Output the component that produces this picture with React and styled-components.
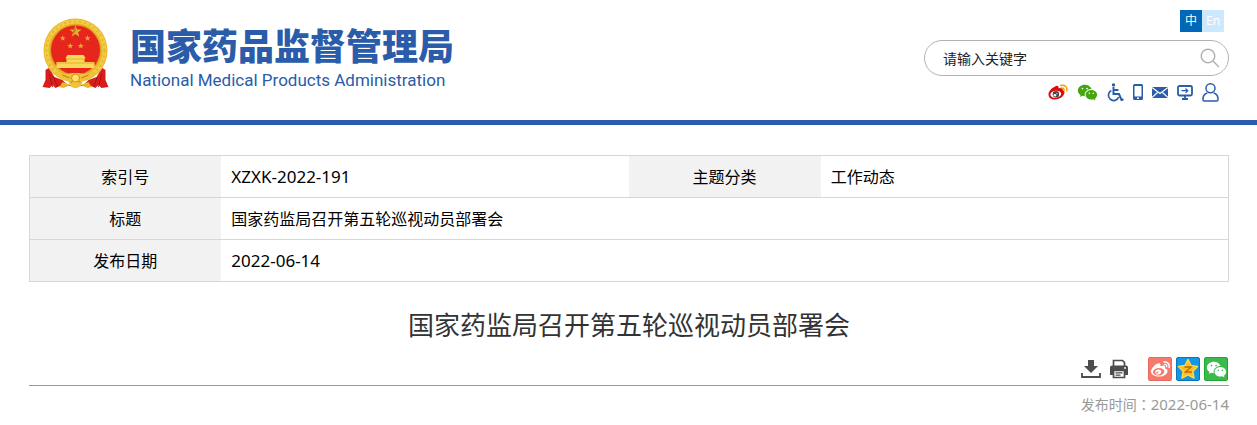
import React from 'react';
import styled, { createGlobalStyle } from 'styled-components';
import { FaWeibo } from 'react-icons/fa';
import { RiWechatFill } from 'react-icons/ri';

const GlobalStyle = createGlobalStyle`
  * {
    box-sizing: border-box;
  }
  body {
    margin: 0;
    background: #fff;
    color: #000;
    font-family: 'Noto Sans CJK SC', sans-serif;
    font-size: 16px;
  }
`;

const Header = styled.header`
  display: flex;
  justify-content: space-between;
  align-items: flex-start;
  padding: 10px 28px 18px 29px;
  border-bottom: 5px solid #2a5caa;
`;

const Logo = styled.a`
  display: flex;
  align-items: flex-start;
  gap: 21px;
  padding: 8px 0 0 13px;
  color: #2a5caa;
  text-decoration: none;
`;

const LogoText = styled.div`
  display: flex;
  flex-direction: column;
  gap: 4px;
  padding-top: 6px;
`;

const LogoName = styled.strong`
  font-size: 36px;
  line-height: 40px;
  font-weight: 900;
`;

const LogoEnglish = styled.span`
  font-family: Roboto, 'Liberation Sans', sans-serif;
  font-size: 17px;
  line-height: 24px;
`;

const HeaderTools = styled.div`
  display: flex;
  flex-direction: column;
  align-items: flex-end;
`;

const Languages = styled.nav`
  display: flex;
  margin: 0 5px 8px 0;
`;

const Language = styled.a`
  width: 22px;
  height: 22px;
  background: ${({ $active }) => ($active ? '#0068b7' : '#cce8ff')};
  color: #fff;
  font-family: 'Noto Sans', 'Noto Sans CJK SC', sans-serif;
  font-size: 12px;
  line-height: 22px;
  text-align: center;
  text-decoration: none;
`;

const Search = styled.form`
  display: flex;
  align-items: center;
  width: 305px;
  height: 36px;
  padding: 0 8px 0 18px;
  border: 1px solid #b3b3b3;
  border-radius: 18px;
`;

const SearchInput = styled.input`
  flex: 1;
  min-width: 0;
  padding: 0;
  border: 0;
  outline: 0;
  background: none;
  font-family: 'Noto Sans CJK SC', sans-serif;
  font-size: 14px;
  color: #222;

  &::placeholder {
    color: #222;
    opacity: 1;
  }
`;

const IconButton = styled.button`
  display: flex;
  padding: 0;
  border: 0;
  background: none;
  color: ${({ $color }) => $color || '#4d4d4d'};
  cursor: pointer;
`;

const QuickLinks = styled.nav`
  display: flex;
  align-items: center;
  gap: 9px;
  height: 20px;
  margin: 6px 10px 0 0;
`;

const QuickLink = styled.a`
  display: flex;
  color: ${({ $color }) => $color || '#2a5caa'};
`;

const Main = styled.main`
  padding: 30px 28px 8px 29px;
`;

const InfoTable = styled.table`
  width: 100%;
  table-layout: fixed;
  border-collapse: collapse;
  border: 1px solid #d7d7d7;
`;

const InfoRow = styled.tr`
  border-bottom: 1px solid #d7d7d7;
`;

const InfoLabel = styled.th`
  width: 16%;
  height: 42px;
  padding: 0 1px 1px 0;
  background: #f2f2f2;
  font-weight: 400;
  line-height: 24px;
`;

const InfoValue = styled.td`
  padding: 0 10px 1px;
  line-height: 24px;
`;

const Latin = styled.span`
  font-family: 'Noto Sans', sans-serif;
  font-size: ${({ $small }) => ($small ? '15px' : '17px')};
`;

// full-width colon centred in its cell
const Colon = styled.span`
  font-family: 'Noto Sans CJK TC', sans-serif;
`;

const Title = styled.h1`
  margin: 22px 0 13px;
  color: #333;
  font-size: 26px;
  line-height: 40px;
  font-weight: 400;
  text-align: center;
`;

const Toolbar = styled.div`
  display: flex;
  justify-content: flex-end;
  align-items: center;
  gap: 4px;
  padding: 0 1px 4px 0;
  border-bottom: 1px solid #999;
`;

const PageActions = styled.div`
  display: flex;
  gap: 8px;
  margin-right: 15px;
`;

const ShareLink = styled.a`
  display: flex;
  align-items: center;
  justify-content: center;
  width: 24px;
  height: 24px;
  border: 1px solid ${({ $border }) => $border};
  border-radius: 2px;
  background: ${({ $background }) => $background};
  color: #fff;
`;

const Published = styled.p`
  margin: 6px 0 0;
  color: #999;
  font-size: 14px;
  line-height: 24px;
  text-align: right;
`;

const star = (cx, cy, r) =>
  Array.from({ length: 10 }, (_, i) => {
    const radius = i % 2 ? r * 0.4 : r;
    const angle = (Math.PI / 5) * i - Math.PI / 2;
    return `${cx + radius * Math.cos(angle)},${cy + radius * Math.sin(angle)}`;
  }).join(' ');

const Emblem = () => (
  <svg width="67" height="71" viewBox="0 0 66 71" aria-hidden="true">
    <circle cx="33" cy="32.500" r="32" fill="#e9b52a" />
    <circle cx="33" cy="32.500" r="29" fill="none" stroke="#f3cb45" strokeWidth="4" />
    <circle cx="33" cy="32.500" r="29" fill="none" stroke="#e8b632" strokeWidth="2" strokeDasharray="2 3" />
    <circle cx="33" cy="32" r="25" fill="none" stroke="#d69a16" strokeWidth="1" />
    <circle cx="33" cy="32" r="24.500" fill="#e6251d" />
    <polygon points={star(33, 13.5, 6.5)} fill="#e3b434" />
    <path d="M33 7v6.500l-4 5.300z" fill="#b8801a" />
    {[[20.3, 20.2], [45, 20.2], [27.7, 28], [38.3, 28]].map(([x, y]) => (
      <polygon key={x} points={star(x, y, 3.2)} fill="#ddb02f" />
    ))}
    <path d="M25 37h16l2 3-1 1v3h10v6H14v-6h10v-3l-1-1z" fill="#f8d95a" />
    <path d="M24 41h18M14 45h38" stroke="#dfa527" strokeWidth=".8" />
    <path d="M6 50l3 4 3 5 8 3 6 6h14l6-6 8-3 3-5 3-4 3 2v10l3 7-7 1-3-3-3 3-7-3H20l-7 3-3-3-3 3-7-1 3-7V52z" fill="#d81e1b" />
    <path d="M7 56l3 13M11 59l4 10M59 56l-3 13M55 59l-4 10" stroke="#a9140f" strokeWidth="1" />
    <path d="M12 53c7 4 14 3 18 2h6c4 1 11 2 18-2l-7 8-7 2c-1 5-3 7-7 7s-6-2-7-7l-7-2z" fill="#f0c238" />
    <path d="M20 57l7 3M46 57l-7 3M28 65l3-3M38 65l-3-3" stroke="#bd7b12" strokeWidth="1" />
    <circle cx="33" cy="60" r="4" fill="#ffe26a" stroke="#cf8c17" />
    <path d="M20 64l8 3-7 3-4-1zM46 64l-8 3 7 3 4-1z" fill="#e8b42c" />
  </svg>
);

const SearchIcon = () => (
  <svg width="20" height="20" viewBox="0 0 20 20" fill="none" stroke="#b3b3b3" strokeWidth="1.500">
    <circle cx="8" cy="8" r="6.800" />
    <path d="M13 13l6 6" />
  </svg>
);

const WeiboColorIcon = () => (
  <svg width="20" height="16" viewBox="0 0 20 16">
    <path d="M7 2.600C9.500 1 11 2 10.500 4.200c3-1.200 5-.4 4.100 1.900 2.200.8 2.300 2.600 1.500 4C14.700 13.500 11 15.500 7 15.500S.5 13.500.5 10.400C.5 7.500 3.600 4.100 7 2.600z" fill="#dc0b12" />
    <ellipse cx="7.800" cy="10.200" rx="5.400" ry="3.500" fill="#fff" transform="rotate(-8 7.800 10.200)" />
    <circle cx="7.900" cy="10.300" r="3.200" fill="#444" />
    <circle cx="6.900" cy="11.200" r="1.300" fill="#fff" />
    <circle cx="8.900" cy="9.700" r=".6" fill="#fff" />
    <path d="M12.700 1.500c4-1.300 7 1.700 5.900 5.300M13.200 4.100c2-.6 3.300.7 2.700 2.500" fill="none" stroke="#f0a300" strokeWidth="1.500" strokeLinecap="round" />
  </svg>
);

const WheelchairIcon = () => (
  <svg width="17" height="19" viewBox="0 0 17 19" fill="none" stroke="currentColor" strokeWidth="1.700">
    <circle cx="6.500" cy="1.900" r="1.700" fill="currentColor" stroke="none" />
    <path d="M6.500 4v7H12l2.500 6 2-.8M6.500 7h5" strokeWidth="2" />
    <path d="M4.300 7.500A5.300 5.300 0 1 0 11.700 14" />
  </svg>
);

const PhoneIcon = () => (
  <svg width="10" height="16" viewBox="0 0 10 16">
    <path fillRule="evenodd" fill="currentColor" d="M1.500 0h7A1.500 1.500 0 0 1 10 1.500v13A1.500 1.500 0 0 1 8.500 16h-7A1.500 1.500 0 0 1 0 14.500v-13A1.500 1.500 0 0 1 1.500 0zM1.500 2v10.500h7V2zM4 13.500V15h2v-1.500z" />
  </svg>
);

const MailIcon = () => (
  <svg width="16" height="11" viewBox="0 0 16 11">
    <path fill="currentColor" d="M0 0h16v11H0z" />
    <path d="M0 .5l8 6 8-6M0 10.500l5.500-5M16 10.500l-5.500-5" fill="none" stroke="#fff" strokeWidth="1.100" />
  </svg>
);

const MonitorIcon = () => (
  <svg width="16" height="15" viewBox="0 0 16 15" fill="none" stroke="currentColor">
    <rect x="1" y="1" width="14" height="9.500" rx="1.500" strokeWidth="1.800" />
    <path d="M4.500 5.700h6M8.500 3.500l2.300 2.200-2.300 2.200" strokeWidth="1.200" />
    <path d="M8 11v3M5 14h6" strokeWidth="1.800" />
  </svg>
);

const UserIcon = () => (
  <svg width="17" height="19" viewBox="0 0 17 19" fill="none" stroke="currentColor" strokeWidth="1.500">
    <circle cx="8.500" cy="5.300" r="4.500" />
    <path d="M5.300 10C2.300 11 .9 13.500.9 16.300c0 1.200.6 1.800 1.600 1.800h12c1 0 1.600-.6 1.600-1.800 0-2.800-1.400-5.300-4.400-6.300" />
  </svg>
);

const DownloadIcon = () => (
  <svg width="20" height="20" viewBox="0 0 20 20" fill="currentColor">
    <path d="M7 1h6v6h4l-7 7-7-7h4z" />
    <path d="M1 14v4h18v-4" fill="none" stroke="currentColor" strokeWidth="1.800" />
  </svg>
);

const PrintIcon = () => (
  <svg width="20" height="20" viewBox="0 0 20 20">
    <path d="M4.500 7V1.500h9L15.500 3.500V7" fill="#fff" stroke="currentColor" strokeWidth="1.700" />
    <path d="M3 6.500h14a2 2 0 0 1 2 2V16H1V8.500a2 2 0 0 1 2-2z" fill="currentColor" />
    <path d="M4.500 11.500h11v7h-11z" fill="#fff" stroke="currentColor" strokeWidth="1.700" />
    <path d="M6.500 13.900h7M6.500 16.200h5" stroke="currentColor" strokeWidth="1.200" />
    <circle cx="16" cy="9" r=".9" fill="#fff" />
  </svg>
);

const QzoneIcon = () => (
  <svg width="22" height="22" viewBox="0 0 22 22">
    <path d="M11 1.500l3 6 6.500 1-4.700 4.800 1.200 6.700-6-3.200L5 20l1.200-6.700L1.500 8.500l6.500-1z" fill="#fdbd20" stroke="#ffd93a" strokeWidth="1.500" strokeLinejoin="round" />
    <path d="M7.500 9h6.500l-5.500 5h6.500" fill="none" stroke="#bd6b09" strokeWidth="1.400" />
  </svg>
);

const quickLinks = [
  { label: '微博', icon: <WeiboColorIcon /> },
  { label: '微信', icon: <RiWechatFill size={21} />, color: '#45a60f' },
  { label: '无障碍', icon: <WheelchairIcon /> },
  { label: '手机版', icon: <PhoneIcon /> },
  { label: '邮箱', icon: <MailIcon /> },
  { label: '电脑版', icon: <MonitorIcon /> },
  { label: '个人中心', icon: <UserIcon /> },
];

const shareLinks = [
  { label: '分享到微博', icon: <FaWeibo size={19} />, background: '#f67a6b', border: '#e96b5f' },
  { label: '分享到QQ空间', icon: <QzoneIcon />, background: '#1596e5', border: '#0876c4' },
  { label: '分享到微信', icon: <RiWechatFill size={21} />, background: '#3bb94a', border: '#21a735' },
];

const App = () => {
  return (
    <>
      <GlobalStyle />
      <Header>
        <Logo href="#">
          <Emblem />
          <LogoText>
            <LogoName>国家药品监督管理局</LogoName>
            <LogoEnglish>National Medical Products Administration</LogoEnglish>
          </LogoText>
        </Logo>
        <HeaderTools>
          <Languages>
            <Language href="#" $active>中</Language>
            <Language href="#">En</Language>
          </Languages>
          <Search role="search">
            <SearchInput type="text" placeholder="请输入关键字" aria-label="请输入关键字" />
            <IconButton type="submit" aria-label="搜索">
              <SearchIcon />
            </IconButton>
          </Search>
          <QuickLinks>
            {quickLinks.map((link) => (
              <QuickLink key={link.label} href="#" aria-label={link.label} $color={link.color}>
                {link.icon}
              </QuickLink>
            ))}
          </QuickLinks>
        </HeaderTools>
      </Header>
      <Main>
        <InfoTable>
          <tbody>
            <InfoRow>
              <InfoLabel scope="row">索引号</InfoLabel>
              <InfoValue><Latin>XZXK-2022-191</Latin></InfoValue>
              <InfoLabel scope="row">主题分类</InfoLabel>
              <InfoValue>工作动态</InfoValue>
            </InfoRow>
            <InfoRow>
              <InfoLabel scope="row">标题</InfoLabel>
              <InfoValue colSpan={3}>国家药监局召开第五轮巡视动员部署会</InfoValue>
            </InfoRow>
            <InfoRow>
              <InfoLabel scope="row">发布日期</InfoLabel>
              <InfoValue colSpan={3}><Latin>2022-06-14</Latin></InfoValue>
            </InfoRow>
          </tbody>
        </InfoTable>
        <Title>国家药监局召开第五轮巡视动员部署会</Title>
        <Toolbar>
          <PageActions>
            <IconButton type="button" aria-label="下载"><DownloadIcon /></IconButton>
            <IconButton type="button" aria-label="打印"><PrintIcon /></IconButton>
          </PageActions>
          {shareLinks.map((link) => (
            <ShareLink
              key={link.label}
              href="#"
              aria-label={link.label}
              $background={link.background}
              $border={link.border}
            >
              {link.icon}
            </ShareLink>
          ))}
        </Toolbar>
        <Published>发布时间<Colon>：</Colon><Latin $small>2022-06-14</Latin></Published>
      </Main>
    </>
  );
};

export default App;
